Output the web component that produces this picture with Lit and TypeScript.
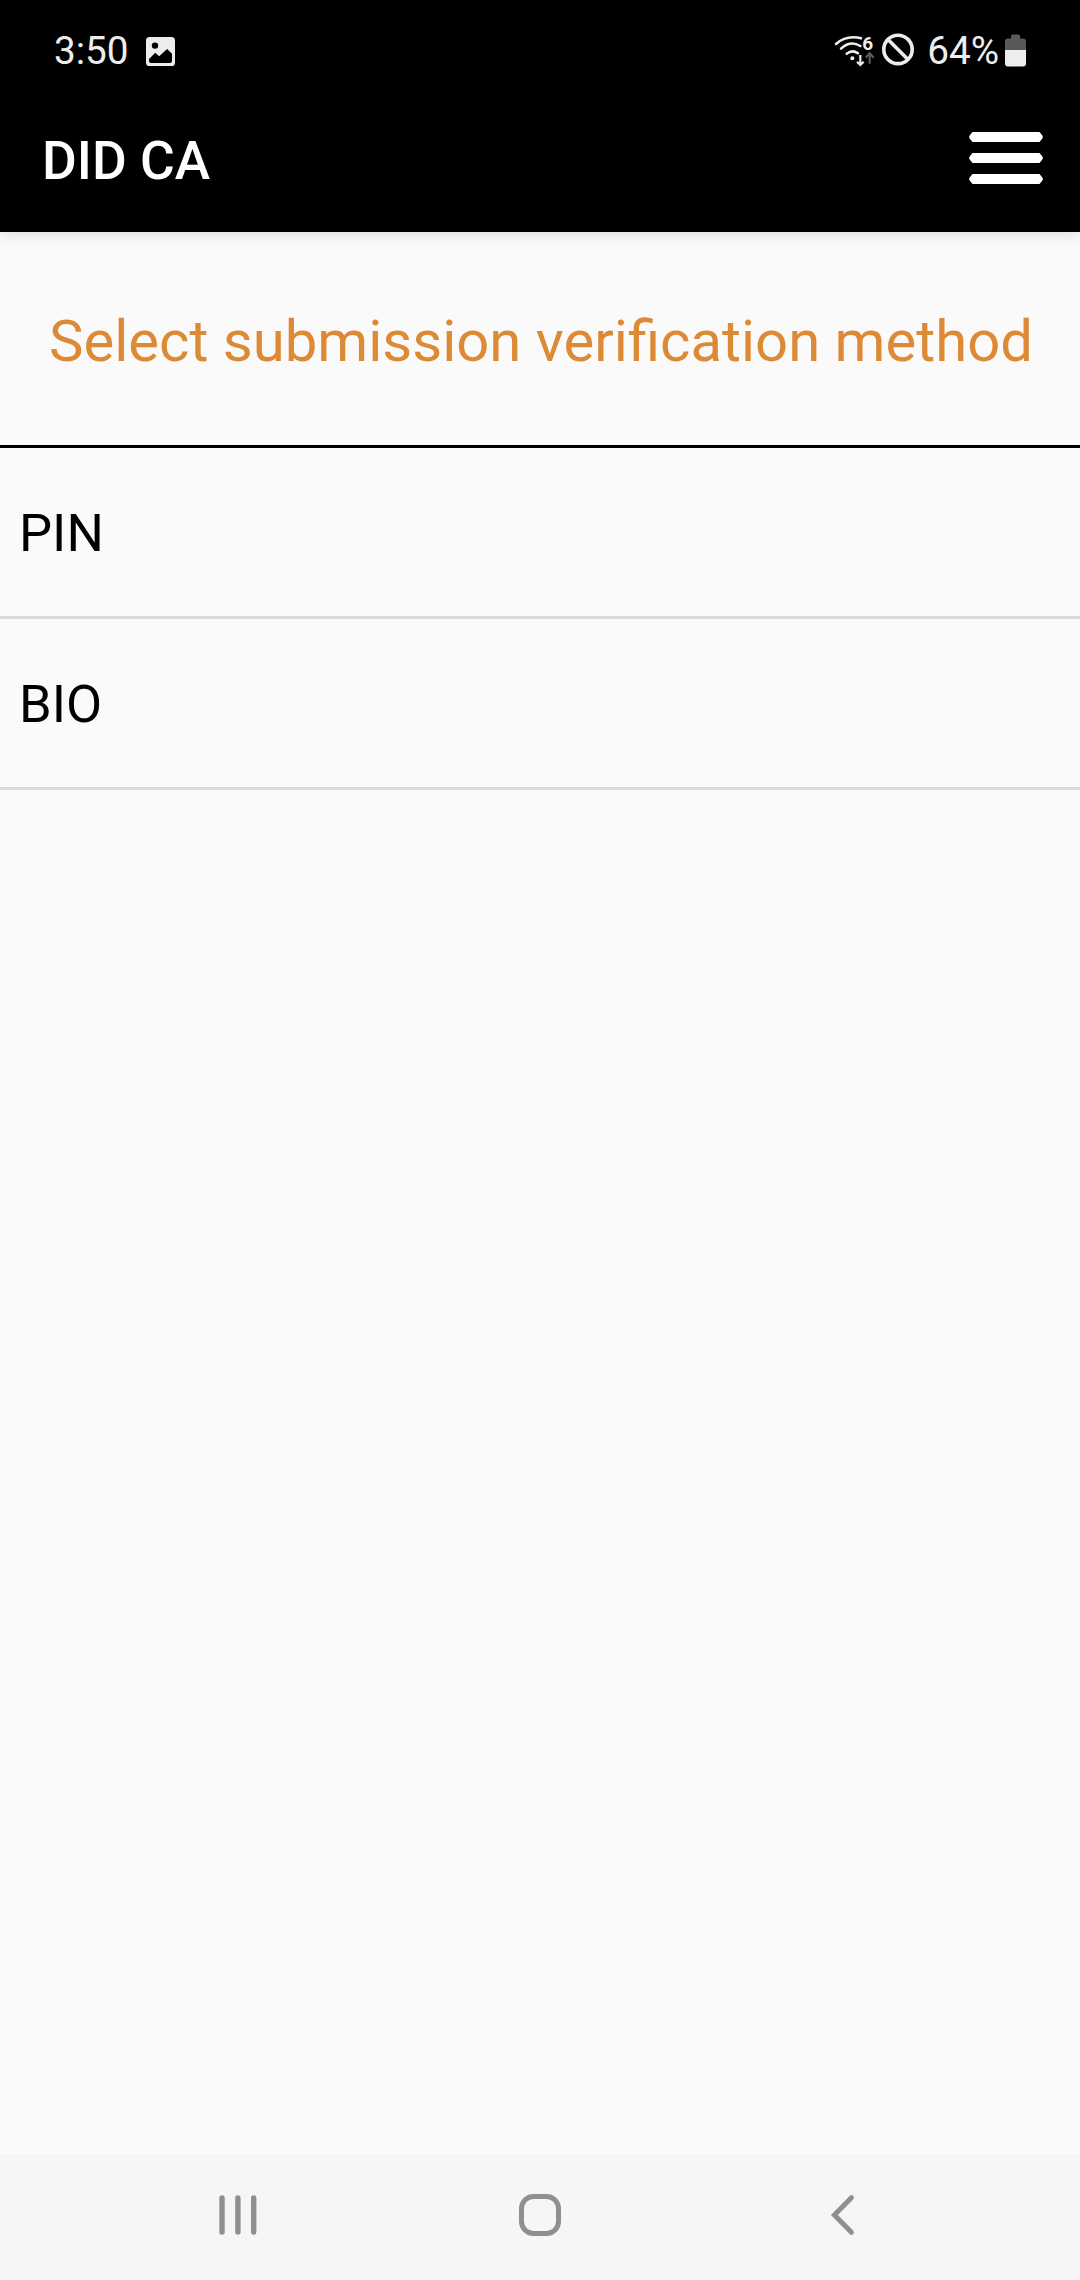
import { LitElement, html, css, svg } from "lit";
import { customElement } from "lit/decorators.js";

const base = css`
  :host {
    display: block;
    font-family: Roboto, "Noto Sans", sans-serif;
  }
  svg {
    display: block;
    flex: none;
    overflow: visible;
  }
`;

const pictureIcon = html`<svg width="29" height="36" viewBox="0 0 29 36">
  <rect x="0" y="4" width="29" height="29" rx="3.6" fill="#ededed" />
  <circle cx="9" cy="12.6" r="3.2" fill="#000" />
  <path d="M3 26 L9.3 19.7 L13.2 23.2 L21.1 16 L26 20.8 V28 Q26 30 24 30 H5 Q3 30 3 28 Z" fill="#000" />
</svg>`;

const wifiIcon = html`<svg width="40" height="36" viewBox="42 39 120 108" fill="none" stroke-linecap="round">
  <g stroke="#ededed" stroke-width="7.600">
    <path d="M48 72 Q80 44 123 55" />
    <path d="M63 86 Q91 60 121 78" />
    <path d="M80 101 Q97 88 114 100" />
    <path d="M121 105 V133 M111 125 L121 135 L131 125" stroke-width="6.500" stroke-linecap="butt" />
  </g>
  <circle cx="97" cy="115" r="6" fill="#ededed" />
  <path d="M149 129 V101 M139 111 L149 100 L159 111" stroke="#5c5c5c" stroke-width="6.500" />
  <text x="127" y="88.500" font-size="57" font-weight="700" fill="#ededed" font-family="Roboto">6</text>
</svg>`;

const blockedIcon = html`<svg width="32" height="36" viewBox="0 0 32 36" fill="none" stroke="#ededed" stroke-width="3.6">
  <circle cx="16" cy="16.400" r="14.200" />
  <path d="M6 6.400 L26 26.400" />
</svg>`;

const batteryIcon = html`<svg width="21" height="36" viewBox="0 0 21 36">
  <path d="M6 5.600 V3 Q6 1.500 7.500 1.500 H13.500 Q15 1.500 15 3 V5.600 H18 Q21 5.600 21 8.600 V17 H0 V8.600 Q0 5.600 3 5.600 Z" fill="#595959" />
  <path d="M0 17 H21 V30.600 Q21 33.600 18 33.600 H3 Q0 33.600 0 30.600 Z" fill="#ededed" />
</svg>`;

@customElement("status-bar")
export class StatusBar extends LitElement {
  static styles = [
    base,
    css`
      .bar {
        display: flex;
        align-items: center;
        height: 102px;
        padding: 0 54px;
        box-sizing: border-box;
        background: #000;
        color: #ededed;
        font-size: 38.7px;
        line-height: 102px;
      }
      .time {
        margin-right: 17.5px;
      }
      .system {
        display: flex;
        align-items: center;
        margin-left: auto;
      }
      .blocked {
        margin: 0 13.6px 0 8px;
      }
      .charge {
        margin-right: 6px;
      }
    `,
  ];
  render() {
    return html`<div class="bar">
      <span class="time">3:50</span>${pictureIcon}
      <div class="system">
        ${wifiIcon}
        <span class="blocked">${blockedIcon}</span>
        <span class="charge">64%</span>
        ${batteryIcon}
      </div>
    </div>`;
  }
}

@customElement("app-bar")
export class AppBar extends LitElement {
  static styles = [
    base,
    css`
      :host {
        position: relative;
        z-index: 1;
      }
      .bar {
        display: flex;
        justify-content: space-between;
        align-items: flex-start;
        height: 130px;
        box-sizing: border-box;
        padding: 0 37px 0 42px;
        background: #000;
        box-shadow: 0 3px 12px rgba(0, 0, 0, 0.11);
      }
      .title {
        margin: 0;
        color: #fff;
        font-size: 53.3px;
        font-weight: 500;
        line-height: 119px;
      }
      .menu {
        padding: 30px 0 0;
        border: 0;
        background: none;
      }
    `,
  ];
  render() {
    return html`<header class="bar">
      <h1 class="title">DID CA</h1>
      <button class="menu" aria-label="Menu">
        <svg width="74" height="52" viewBox="0 0 74 52" fill="#fff">
          ${[0, 21, 42].map(
            (y) => svg`<path transform="translate(0 ${y})" d="M3.500 0 H70.500 L73 3 L74 5 L73 7 L70.500 10 H3.500 L1 7 L0 5 L1 3 Z" />`
          )}
        </svg>
      </button>
    </header>`;
  }
}

@customElement("method-list")
export class MethodList extends LitElement {
  private methods = ["PIN", "BIO"];
  static styles = [
    base,
    css`
      .heading {
        height: 216px;
        box-sizing: border-box;
        margin: 0;
        padding: 3px 0 0 2px;
        border-bottom: 3px solid #000;
        color: #dd8a36;
        font-size: 58px;
        font-weight: 400;
        line-height: 213px;
        text-align: center;
        white-space: nowrap;
      }
      .list {
        margin: 0;
        padding: 0;
        list-style: none;
      }
      .row {
        height: 171px;
        box-sizing: border-box;
        padding: 2px 19px 0;
        border-bottom: 3px solid #dadada;
        color: #000;
        font-size: 52.5px;
        line-height: 167px;
      }
    `,
  ];
  render() {
    return html`<h2 class="heading">Select submission verification method</h2>
      <ul class="list">
        ${this.methods.map((m) => html`<li class="row">${m}</li>`)}
      </ul>`;
  }
}

@customElement("nav-bar")
export class NavBar extends LitElement {
  static styles = [
    base,
    css`
      .bar {
        display: flex;
        justify-content: center;
        align-items: center;
        gap: 260px;
        height: 126px;
        padding-bottom: 4px;
        box-sizing: border-box;
        background: #f6f6f6;
      }
    `,
  ];
  render() {
    return html`<nav class="bar">
      <svg width="42" height="42" viewBox="0 0 42 42" stroke="#8f8f8f" stroke-width="5.400" stroke-linecap="round">
        <path d="M5 4 V38 M20.900 4 V38 M36.700 4 V38" />
      </svg>
      <svg width="42" height="42" viewBox="0 0 42 42" fill="none" stroke="#8f8f8f" stroke-width="5">
        <rect x="2.500" y="2.500" width="37" height="37" rx="12" />
      </svg>
      <svg width="42" height="42" viewBox="0 0 42 42" fill="none" stroke="#8f8f8f" stroke-width="5" stroke-linecap="round">
        <path d="M30.400 3.700 L13.400 21 L30.400 38.300" />
      </svg>
    </nav>`;
  }
}

@customElement("app-root")
export class AppRoot extends LitElement {
  static styles = [
    base,
    css`
      .screen {
        display: flex;
        flex-direction: column;
        height: 2280px;
        background: #fafafa;
      }
      .content {
        flex: 1;
      }
    `,
  ];
  render() {
    return html`<div class="screen">
      <status-bar></status-bar>
      <app-bar></app-bar>
      <method-list class="content"></method-list>
      <nav-bar></nav-bar>
    </div>`;
  }
}
